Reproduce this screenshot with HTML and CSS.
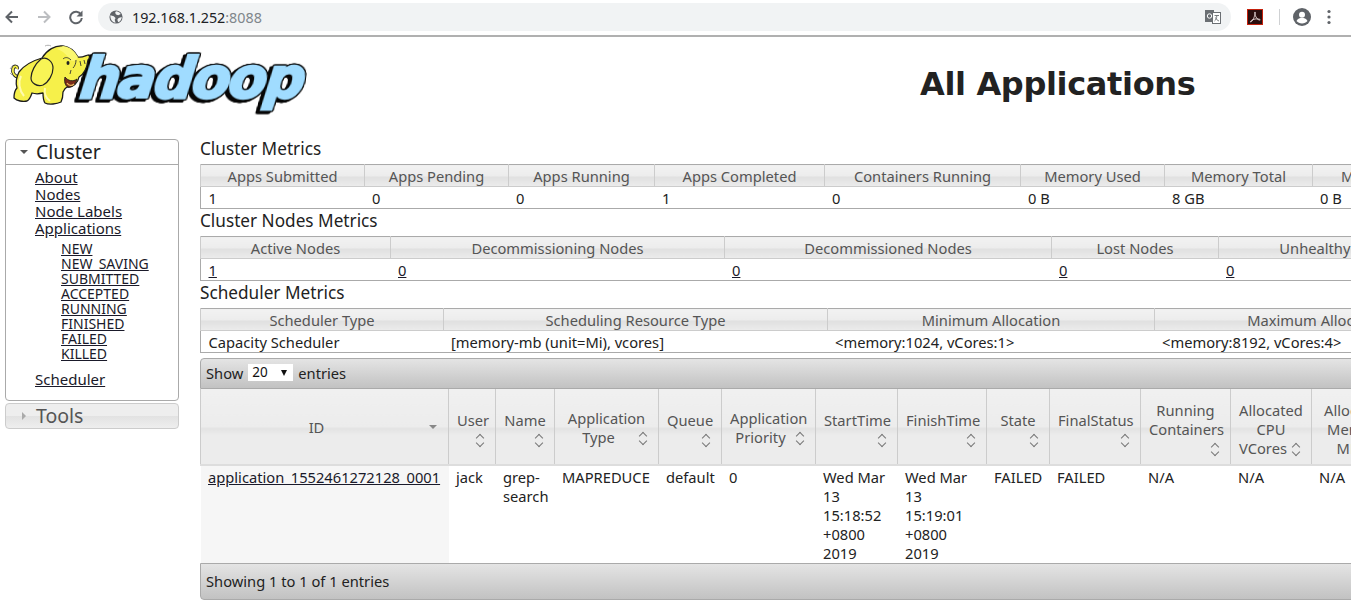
FILE: index.html
```html
<!DOCTYPE html>
<html lang="en">
<head>
<meta charset="utf-8">
<title>All Applications</title>
<link rel="stylesheet" href="styles.css">
</head>
<body>
<div class="toolbar">
  <svg class="tb-icon back" viewBox="0 0 16 16"><path d="M14 8H3M8 2.500 2.500 8 8 13.500" fill="none" stroke="#5f6368" stroke-width="2"/></svg>
  <svg class="tb-icon fwd" viewBox="0 0 16 16"><path d="M2 8h11M8 2.500 13.500 8 8 13.500" fill="none" stroke="#bcbec1" stroke-width="2"/></svg>
  <svg class="tb-icon reload" viewBox="0 0 16 16"><path d="M13 5.500A5.800 5.800 0 1 0 13.800 9" fill="none" stroke="#5f6368" stroke-width="2"/><path d="M14.500 1.500v6h-6z" fill="#5f6368"/></svg>
  <div class="omnibox">
    <svg class="globe" viewBox="0 0 16 16"><circle cx="8" cy="8" r="7.500" fill="#5f6368"/><path d="M1.500 6l4 1 2 2-1 2 1 3.500c-3 0-6-3-6-8.500zM8 1.500c2 0 4 1 5.500 3l-3 1.500-2.500-1-1-2zM11 9l3.500-1c0 3-1.500 5-4 6l-1-3z" fill="#f1f3f4"/></svg>
    <span class="host">192.168.1.252</span><span class="port">:8088</span>
    <svg class="translate" viewBox="0 0 16 16"><rect x="0" y="1" width="9" height="12" fill="#6b6f73"/><rect x="7.500" y="3.500" width="8" height="11" fill="#fff" stroke="#6b6f73"/><path d="M9.500 6.500h4.500M11.800 6.500c0 3-1 4.500-2.300 5.500M10.500 8.500c.5 1.500 2 3 3.500 3.500" fill="none" stroke="#6b6f73" stroke-width=".9"/><circle cx="4.500" cy="7" r="2.200" fill="none" stroke="#fff"/></svg>
  </div>
  <svg class="pdf" viewBox="0 0 16 16"><rect x=".5" y=".5" width="15" height="15" fill="#2b0d0d" stroke="#c4200c"/><path d="M8 3c-.8 0 0 3 1 5s3 3.500 4 3-2-1.500-5-1-5 2.500-4.500 3 2.500-2 3.500-4.500S8.800 3 8 3z" fill="none" stroke="#e8d8d8" stroke-width=".9"/></svg>
  <span class="tb-sep"></span>
  <svg class="avatar" viewBox="0 0 18 18"><circle cx="9" cy="9" r="9" fill="#5f6368"/><circle cx="9" cy="6.800" r="3" fill="#fff"/><path d="M3.500 13c1-2.500 3.500-3 5.500-3s4.500.5 5.500 3c-1.300 1.500-3.300 2.500-5.500 2.500S4.800 14.500 3.500 13z" fill="#fff"/></svg>
  <svg class="menu" viewBox="0 0 4 16"><circle cx="2" cy="2.500" r="1.600" fill="#5f6368"/><circle cx="2" cy="8" r="1.600" fill="#5f6368"/><circle cx="2" cy="13.500" r="1.600" fill="#5f6368"/></svg>
</div>

<header class="page-head">
  <div class="logo">
    <span class="wordmark">hadoop</span>
    <svg class="elephant" viewBox="0 0 100 70">
      <path d="M14 37C10 37 7 33 8 29 9 25 13 26 12 29" fill="none" stroke="#222" stroke-width="3.500"/>
      <path d="M14 37C10 37 7 33 8 29 9 25 13 26 12 29" fill="none" stroke="#f6f04a" stroke-width="1.800"/>
      <path d="M14 32C20 24 30 20 37 18 42 10 50 5 58 6 66 7 70 12 73 17 76 18 80 16 83 15 85 15 85 18 83 20 82 28 79 34 74 37 73 43 68 48 62 47 60 48 59 50 58 52 58 56 57 60 56 62 52 64 44 65 40 63 38 60 38 56 38 53 34 54 30 54 27 53 26 56 24 60 22 61 18 62 12 61 9 58 9 54 10 50 12 48 10 42 12 36 14 32Z" fill="#f6f04a" stroke="#1c1c1c" stroke-width="1.300" stroke-linejoin="round"/>
      <path d="M36 19C30 24 26 32 26 38 26 43 32 47 38 45 44 42 48 34 48 28 48 22 42 16 36 19Z" fill="#f8f455" stroke="#222" stroke-width="1.200"/>
      <path d="M16 36C13 42 14 50 19 56M40 48C39 53 41 58 45 61" fill="none" stroke="#fffbb0" stroke-width="2"/>
      <path d="M58 6C66 7 70 12 73 17 70 22 66 22 64 18 60 13 56 10 52 9Z" fill="#fbf870"/>
      <ellipse cx="63" cy="23" rx="1.500" ry="2" fill="#222"/>
      <path d="M58 19C60 17 63 17 66 20M71 20C71 23 70 26 68 28M75 21 76 26M79 20 80 24M66 30 65 34" fill="none" stroke="#333" stroke-width=".9"/>
      <path d="M60 37C63 41 68 42 72 39 71 44 67 48 63 47 60 46 59 41 60 37Z" fill="#7a2a18" stroke="#1c1c1c" stroke-width=".9"/>
      <path d="M62 43C64 46 67 46 69 44" fill="none" stroke="#e9b860" stroke-width="1.300"/>
      <path d="M40 6C42 5 44 5 46 6M8 25 5 29M5 33 7 35" fill="none" stroke="#999" stroke-width=".8"/>
    </svg>
  </div>
  <h1 class="title">All Applications</h1>
</header>

<main class="layout">
  <nav class="sidebar">
    <section class="panel">
      <h3 class="panel-title"><span class="caret-down"></span>Cluster</h3>
      <ul class="nav-list">
        <li><a href="#">About</a></li>
        <li><a href="#">Nodes</a></li>
        <li><a href="#">Node Labels</a></li>
        <li><a href="#">Applications</a>
          <ul class="sub-list">
            <li><a href="#">NEW</a></li>
            <li><a href="#">NEW_SAVING</a></li>
            <li><a href="#">SUBMITTED</a></li>
            <li><a href="#">ACCEPTED</a></li>
            <li><a href="#">RUNNING</a></li>
            <li><a href="#">FINISHED</a></li>
            <li><a href="#">FAILED</a></li>
            <li><a href="#">KILLED</a></li>
          </ul>
        </li>
        <li><a href="#">Scheduler</a></li>
      </ul>
    </section>
    <section class="panel-closed"><span class="caret-right"></span>Tools</section>
  </nav>

  <div class="content">
    <div class="metric">
      <h3 class="metric-title">Cluster Metrics</h3>
      <table class="metric-table m1">
        <thead><tr><th>Apps Submitted</th><th>Apps Pending</th><th>Apps Running</th><th>Apps Completed</th><th>Containers Running</th><th>Memory Used</th><th>Memory Total</th><th>Memory Reserved</th></tr></thead>
        <tbody><tr><td>1</td><td>0</td><td>0</td><td>1</td><td>0</td><td>0 B</td><td>8 GB</td><td>0 B</td></tr></tbody>
      </table>
    </div>
    <div class="metric">
      <h3 class="metric-title">Cluster Nodes Metrics</h3>
      <table class="metric-table m2">
        <thead><tr><th>Active Nodes</th><th>Decommissioning Nodes</th><th>Decommissioned Nodes</th><th>Lost Nodes</th><th>Unhealthy Nodes</th></tr></thead>
        <tbody><tr><td><a href="#">1</a></td><td><a href="#">0</a></td><td><a href="#">0</a></td><td><a href="#">0</a></td><td><a href="#">0</a></td></tr></tbody>
      </table>
    </div>
    <div class="metric">
      <h3 class="metric-title">Scheduler Metrics</h3>
      <table class="metric-table m3">
        <thead><tr><th>Scheduler Type</th><th>Scheduling Resource Type</th><th>Minimum Allocation</th><th>Maximum Allocation</th></tr></thead>
        <tbody><tr><td>Capacity Scheduler</td><td>[memory-mb (unit=Mi), vcores]</td><td>&lt;memory:1024, vCores:1&gt;</td><td>&lt;memory:8192, vCores:4&gt;</td></tr></tbody>
      </table>
    </div>

    <div class="dt-bar dt-top">Show
      <span class="select">20<span class="select-arrow"></span></span>
      entries</div>
    <table class="apps">
      <thead>
        <tr>
          <th class="sorted">ID<span class="sort-desc"></span></th>
          <th>User<span class="sort"></span></th>
          <th>Name<span class="sort"></span></th>
          <th class="two">Application Type<span class="sort"></span></th>
          <th>Queue<span class="sort"></span></th>
          <th class="two">Application Priority<span class="sort"></span></th>
          <th>StartTime<span class="sort"></span></th>
          <th>FinishTime<span class="sort"></span></th>
          <th>State<span class="sort"></span></th>
          <th>FinalStatus<span class="sort"></span></th>
          <th>Running Containers<span class="sort"></span></th>
          <th>Allocated CPU VCores<span class="sort"></span></th>
          <th>Allocated Memory MB<span class="sort"></span></th>
        </tr>
      </thead>
      <tbody>
        <tr>
          <td class="id-cell"><a href="#">application_1552461272128_0001</a></td>
          <td>jack</td>
          <td>grep-search</td>
          <td>MAPREDUCE</td>
          <td>default</td>
          <td>0</td>
          <td>Wed Mar 13 15:18:52 +0800 2019</td>
          <td>Wed Mar 13 15:19:01 +0800 2019</td>
          <td>FAILED</td>
          <td>FAILED</td>
          <td>N/A</td>
          <td>N/A</td>
          <td>N/A</td>
        </tr>
      </tbody>
    </table>
    <div class="dt-bar dt-bottom">Showing 1 to 1 of 1 entries</div>
  </div>
</main>
</body>
</html>
```
FILE: styles.css
```css
* { box-sizing: border-box; }
html, body { margin: 0; height: 605px; overflow: hidden; background: #fff; }
body { font-family: "Noto Sans", "Open Sans", sans-serif; font-size: 14.700px; color: #222; }
a { color: #1a1a2a; }

.toolbar { height: 37px; border-bottom: 2px solid #b0b0b0; display: flex; align-items: center; background: #fff; padding-bottom: 1px; }
.tb-icon { width: 16px; height: 16px; flex: none; }
.back { margin-left: 4px; }
.fwd { margin-left: 16px; }
.reload { margin-left: 16px; }
.omnibox { margin-left: 14px; width: 1133px; height: 28px; border-radius: 14px; background: #f1f3f4; display: flex; align-items: center; padding-left: 11px; font-size: 14.300px; }
.globe { width: 14px; height: 14px; margin-right: 9px; flex: none; }
.host { color: #202124; }
.port { color: #80868b; }
.translate { width: 16px; height: 16px; margin-left: auto; margin-right: 10px; }
.pdf { width: 16px; height: 16px; margin-left: 16px; flex: none; }
.tb-sep { width: 1px; height: 16px; background: #cfd1d3; margin-left: 16px; flex: none; }
.avatar { width: 18px; height: 18px; margin-left: 13px; flex: none; }
.menu { width: 4px; height: 16px; margin-left: 16px; flex: none; }

.page-head { height: 102px; position: relative; display: flex; }
.logo { width: 310px; height: 78px; margin-left: 5px; margin-top: 3px; position: relative; flex: none; }
.elephant { width: 100px; height: 70px; display: block; position: relative; z-index: 1; }
.wordmark { position: absolute; left: 76px; top: 6px; font-family: "DejaVu Sans", sans-serif; font-weight: 700; font-style: italic; font-size: 56px; letter-spacing: -2px; line-height: 66px; color: #a0dcff; -webkit-text-stroke: 2.500px #a0dcff; filter: drop-shadow(1px 0 0 #060606) drop-shadow(-1px 0 0 #060606) drop-shadow(0 1px 0 #060606) drop-shadow(0 -1px 0 #060606) drop-shadow(-3px 2px 0 #060606); transform: skewX(-7deg); }
.title { margin: 27px 0 0 605px; font-family: "DejaVu Sans", sans-serif; font-size: 32px; letter-spacing: -.35px; line-height: 40px; font-weight: 700; color: #222; white-space: nowrap; }

.layout { display: flex; align-items: flex-start; padding-left: 5px; }
.sidebar { width: 174px; flex: none; margin-right: 21px; }
.panel { border: 1px solid #aaa; border-radius: 4px; height: 262px; }
.panel-title { margin: 0; height: 25px; border-bottom: 1px solid #aaa; font-size: 19.500px; line-height: 24px; font-weight: 400; padding-left: 14px; display: flex; align-items: center; color: #222; }
.caret-down { width: 0; height: 0; border: 4px solid transparent; border-top-color: #555; border-bottom: 0; margin-right: 8px; }
.nav-list, .sub-list { list-style: none; margin: 0; padding: 0; }
.nav-list { padding: 4px 0 0 29px; line-height: 17px; font-size: 15px; }
.sub-list { padding: 4px 0 10px 26px; font-size: 14px; line-height: 15px; }
.panel-closed { margin-top: 2px; height: 26px; border: 1px solid #ccc; border-radius: 4px; background: linear-gradient(#eeeeee 50%, #e2e2e2 50%, #eee); font-size: 19.500px; line-height: 24px; color: #555; padding-left: 16px; display: flex; align-items: center; }
.caret-right { width: 0; height: 0; border: 4px solid transparent; border-left-color: #aaa; border-right: 0; margin-right: 10px; }

.content { width: 1300px; flex: none; }
.metric-title { margin: 0; height: 25px; font-size: 17.200px; line-height: 20px; font-weight: 400; color: #222; }
.metric { height: 72px; }
.metric-table { border-collapse: collapse; table-layout: fixed; border: 1px solid #aaa; }
.metric-table th { height: 22px; padding: 1px 0 0; font-weight: 400; line-height: 20px; color: #555; background: linear-gradient(#f2f2f2 0, #ececec 50%, #e0e0e0 55%, #ececec 100%); border: 1px solid #ccc; border-top: 0; white-space: nowrap; overflow: hidden; }
.metric-table td { height: 22px; padding: 1px 8px 0 7.500px; line-height: 20px; color: #222; white-space: nowrap; }
.m1 { width: 1295px; }
.m1 th:nth-child(1) { width: 164px; }
.m1 th:nth-child(2) { width: 144px; }
.m1 th:nth-child(3) { width: 146px; }
.m1 th:nth-child(4) { width: 170px; }
.m1 th:nth-child(5) { width: 196px; }
.m1 th:nth-child(6) { width: 144px; }
.m1 th:nth-child(7) { width: 148px; }
.m2 { width: 1260px; }
.m2 th:nth-child(1) { width: 190px; }
.m2 th:nth-child(2) { width: 334px; }
.m2 th:nth-child(3) { width: 327px; }
.m2 th:nth-child(4) { width: 167px; }
.m3 { width: 1282px; }
.m3 th:nth-child(1) { width: 243px; }
.m3 th:nth-child(2) { width: 384px; }
.m3 th:nth-child(3) { width: 327px; }

.dt-bar { border: 1px solid #aaa; background: linear-gradient(#e4e4e4, #c2c2c2); color: #222; padding-left: 5px; display: flex; align-items: center; width: 1300px; }
.dt-top { height: 31px; margin-top: 3px; border-radius: 4px 0 0 0; gap: 5px; padding-bottom: 2px; }
.dt-bottom { height: 37px; border-radius: 0 0 0 4px; padding-bottom: 1px; }
.select { width: 45px; height: 17px; background: #fff; font-size: 13.500px; line-height: 17px; padding-left: 4px; position: relative; color: #111; }
.select-arrow { position: absolute; right: 6px; top: 6px; width: 0; height: 0; border: 3.500px solid transparent; border-top: 6px solid #111; border-bottom: 0; }

.apps { width: 1200px; border-collapse: collapse; table-layout: fixed; }
.apps th { height: 76px; padding: 6px 8px 0; background: linear-gradient(#f0f0f0 0, #ececec 50%, #e3e3e3 53%, #ececec 62%, #ececec 100%); font-weight: 400; color: #555; line-height: 19px; border: 1px solid #ccc; border-top: 0; border-bottom: 2px solid #ddd; position: relative; vertical-align: middle; }
.apps th.sorted { padding-top: 2px; padding-right: 24px; }
.apps th.two { padding-top: 2px; }
.apps th:nth-child(1) { width: 248px; }
.apps th:nth-child(2) { width: 47px; }
.apps th:nth-child(3) { width: 59px; }
.apps th:nth-child(4) { width: 104px; }
.apps th:nth-child(5) { width: 63px; }
.apps th:nth-child(6) { width: 94px; }
.apps th:nth-child(7) { width: 82px; }
.apps th:nth-child(8) { width: 89px; }
.apps th:nth-child(9) { width: 63px; }
.apps th:nth-child(10) { width: 91px; }
.apps th:nth-child(11) { width: 90px; }
.apps th:nth-child(12) { width: 81px; }
.apps th:nth-child(13) { width: 89px; }
.apps td { height: 97px; vertical-align: top; padding: 2px 7px 0 7.500px; line-height: 19px; color: #222; }
.apps .id-cell { background: #f6f6f6; white-space: nowrap; }
.sort { display: inline-block; width: 12px; height: 1px; margin-left: 4px; }
.sort::before, .sort::after { content: ""; position: absolute; right: 12px; width: 5px; height: 5px; border-left: 1px solid #777; border-top: 1px solid #777; }
.sort::before { margin-top: -9px; transform: rotate(45deg); }
.sort::after { margin-top: -4px; transform: rotate(225deg); }
.sort-desc { position: absolute; right: 11px; top: 36px; width: 0; height: 0; border: 4px solid transparent; border-top: 4px solid #888; border-bottom: 0; }
```
